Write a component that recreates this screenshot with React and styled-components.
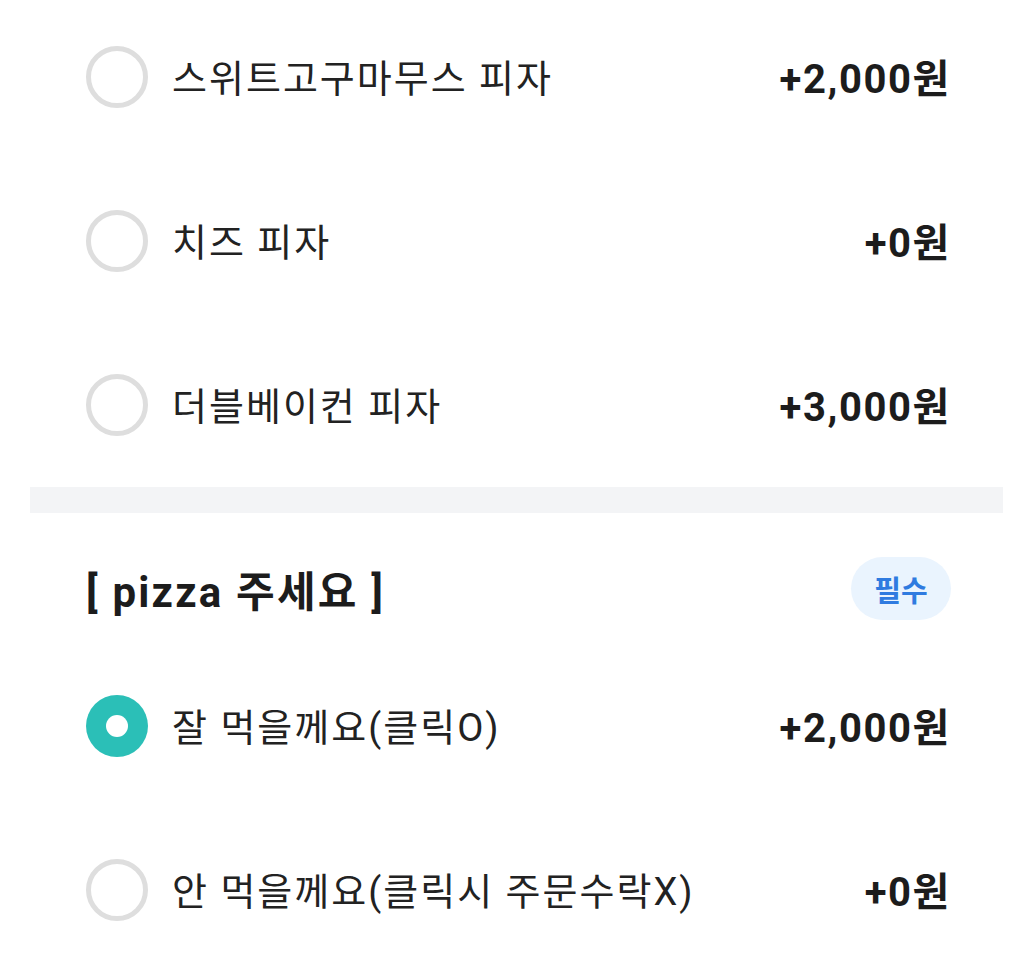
import styled, { createGlobalStyle } from "styled-components";

const GlobalStyle = createGlobalStyle`
  body {
    margin: 0;
    background: #ffffff;
    font-family: Roboto, "Noto Sans CJK KR", sans-serif;
    color: #1f1f1f;
  }
`;

const Page = styled.div`
  width: 1024px;
  height: 971px;
  overflow: hidden;
  padding: 0 21px 0 30px;
  box-sizing: border-box;
  margin-top: -5px;
`;

const Group = styled.section`
  padding: 0 56px;
`;

const Row = styled.div`
  display: flex;
  align-items: center;
  height: 164px;
`;

const Radio = styled.span`
  width: 62px;
  height: 62px;
  box-sizing: border-box;
  border-radius: 50%;
  flex-shrink: 0;
  display: flex;
  align-items: center;
  justify-content: center;
  border: ${(p) => (p.$checked ? "none" : "5px solid #dedede")};
  background: ${(p) => (p.$checked ? "#2bbfb7" : "#ffffff")};

  &::after {
    content: "";
    display: ${(p) => (p.$checked ? "block" : "none")};
    width: 22px;
    height: 22px;
    border-radius: 50%;
    background: #ffffff;
  }
`;

const Label = styled.span`
  flex: 1;
  margin-left: 24px;
  margin-top: -3px;
  font-size: 38px;
  letter-spacing: 2px;
  font-weight: 400;
  color: #222222;
  white-space: nowrap;
`;

const Price = styled.span`
  font-size: 40px;
  letter-spacing: 1.6px;
  margin-right: -4px;
  margin-top: -3px;
  font-weight: 700;
  color: #1c1c1c;
  white-space: nowrap;
`;

const Divider = styled.div`
  height: 26px;
  background: #f3f4f6;
`;

const Header = styled.div`
  display: flex;
  align-items: center;
  justify-content: space-between;
  padding: 44px 0 24px;
`;

const Title = styled.h2`
  margin: 0;
  font-size: 42px;
  letter-spacing: 2.2px;
  font-weight: 700;
  color: #1c1c1c;
`;

const Badge = styled.span`
  display: flex;
  align-items: center;
  justify-content: center;
  width: 100px;
  height: 63px;
  margin-right: -4px;
  border-radius: 32px;
  background: #eaf4fe;
  color: #2f7be0;
  font-size: 29px;
  font-weight: 700;
`;

const Option = ({ label, price, checked }) => (
  <Row>
    <Radio $checked={checked} />
    <Label>{label}</Label>
    <Price>{price}</Price>
  </Row>
);

export default function App() {
  return (
    <>
      <GlobalStyle />
      <Page>
        <Group>
          <Option label="스위트고구마무스 피자" price="+2,000원" />
          <Option label="치즈 피자" price="+0원" />
          <Option label="더블베이컨 피자" price="+3,000원" />
        </Group>
        <Divider />
        <Group>
          <Header>
            <Title>[ pizza 주세요 ]</Title>
            <Badge>필수</Badge>
          </Header>
          <Option label="잘 먹을께요(클릭O)" price="+2,000원" checked />
          <Option label="안 먹을께요(클릭시 주문수락X)" price="+0원" />
        </Group>
      </Page>
    </>
  );
}
